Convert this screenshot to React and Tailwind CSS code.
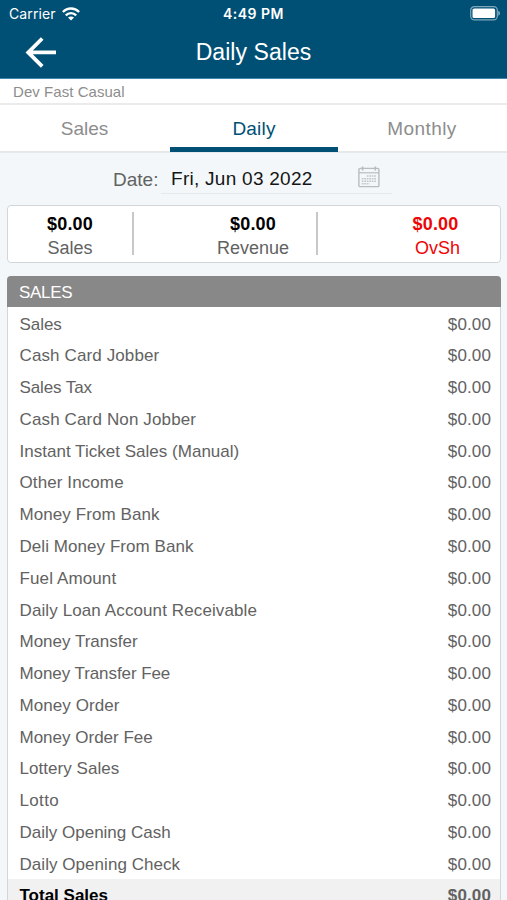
import React from "react";

const rows = [
  ["Sales", "tracking-[-0.05px]"],
  ["Cash Card Jobber", "tracking-[0.12px]"],
  ["Sales Tax", "tracking-[-0.1px]"],
  ["Cash Card Non Jobber", "tracking-[0.14px]"],
  ["Instant Ticket Sales (Manual)", "tracking-[0.02px]"],
  ["Other Income", "tracking-[0.1px]"],
  ["Money From Bank", "tracking-[0.08px]"],
  ["Deli Money From Bank", "tracking-[0.06px]"],
  ["Fuel Amount", "tracking-[0.12px]"],
  ["Daily Loan Account Receivable", "tracking-[0.11px]"],
  ["Money Transfer", "tracking-[0px]"],
  ["Money Transfer Fee", "tracking-[-0.08px]"],
  ["Money Order", "tracking-[0.08px]"],
  ["Money Order Fee", "tracking-[0px]"],
  ["Lottery Sales", "tracking-[0.05px]"],
  ["Lotto", "tracking-[0.35px]"],
  ["Daily Opening Cash", "tracking-[0px]"],
  ["Daily Opening Check", "tracking-[0.05px]"],
];

function WifiIcon() {
  return (
    <svg width="18" height="14" viewBox="0 0 18 14" fill="none" stroke="#fff" strokeWidth="2.4">
      <path d="M0.9 5C5.3 0.4 12.7 0.4 17.1 5" />
      <path d="M3.8 8.3C6.7 5.4 11.3 5.4 14.2 8.3" />
      <path d="M9 13.4L6 10.5C7.7 9 10.3 9 12 10.5Z" fill="#fff" stroke="none" />
    </svg>
  );
}

function BatteryIcon() {
  return (
    <svg width="31" height="15" viewBox="0 0 31 15">
      <rect x="0.7" y="0.7" width="26.6" height="13.2" rx="3.6" fill="none" stroke="#7fa7ba" strokeWidth="1.2" />
      <rect x="2.5" y="2.5" width="22.6" height="9.6" rx="1.6" fill="#fff" />
      <path d="M28.2 4.8V9.8C30.6 8.7 30.6 5.9 28.2 4.8Z" fill="#7fa7ba" />
    </svg>
  );
}

function BackIcon() {
  return (
    <svg width="32" height="32" viewBox="0 0 32 32" fill="none" stroke="#fff" strokeWidth="3.8">
      <path d="M31 15.4H3.2M17.2 1.5L3.2 15.4L17.2 29.3" />
    </svg>
  );
}

function CalendarIcon() {
  return (
    <svg width="22" height="22" viewBox="0 0 22 22" fill="none" stroke="#b9bcbf">
      <rect x="0.9" y="2.4" width="20" height="18.2" rx="1.2" strokeWidth="1.4" />
      <path d="M1 6.8H21" strokeWidth="1.2" />
      <path d="M4.6 0.4V4.4M17.3 0.4V4.4" strokeWidth="1.6" />
      <path
        d="M8.7 10H18.4M3.7 12.7H18.4M3.7 15.3H18.4M3.7 17.8H11.5"
        stroke="#c6c9cc"
        strokeWidth="1.6"
        strokeDasharray="1.8 0.7"
      />
    </svg>
  );
}

export default function App() {
  return (
    <div className="flex h-[900px] w-[507px] flex-col overflow-hidden bg-[#f3f7fa] font-['Liberation_Sans',Arial,sans-serif] text-[#626262]">
      <header className="h-[79px] shrink-0 border-b border-[#3f86ab] bg-[#005075] text-white">
        <div className="grid h-[27px] grid-cols-3 items-center font-['Inter',sans-serif] text-[14px] leading-[27px]">
          <div className="flex items-center gap-[6px] pl-[9px]">
            <span className="tracking-[0.1px]">Carrier</span>
            <WifiIcon />
          </div>
          <div className="text-center font-semibold tracking-[0.5px]">4:49 PM</div>
          <div className="flex justify-end pr-[6px]">
            <BatteryIcon />
          </div>
        </div>
        <div className="grid h-[51px] grid-cols-[1fr_2fr_1fr] items-center">
          <div className="pl-[25px]">
            <BackIcon />
          </div>
          <h1 className="text-center text-[23px] leading-[49px] tracking-[0.05px]">Daily Sales</h1>
        </div>
      </header>

      <div className="h-[26px] shrink-0 border-b-2 border-[#ebebeb] bg-white pl-[13px] text-[15px] leading-[26px] tracking-[0.05px] text-[#8d8d8d]">
        <span>Dev Fast Casual</span>
      </div>

      <nav className="grid h-[48px] shrink-0 grid-cols-3 border-b-2 border-[#e6e8ea] bg-white text-center text-[19px] leading-[48px] text-[#8d8d8d]">
        <div>Sales</div>
        <div className="-mb-[2px] ml-px h-[47px] border-b-[5px] border-[#005075] tracking-[0.2px] text-[#005075]">Daily</div>
        <div className="pr-px tracking-[0.4px]">Monthly</div>
      </nav>

      <div className="flex h-[52px] shrink-0 pl-[113px]">
        <span className="mr-[2px] w-[46px] text-[19px] leading-[53px]">Date:</span>
        <div className="flex h-[41px] w-[231px] items-start justify-between border-b border-[#e6e9ec] pl-[10px] pr-[12px]">
          <span className="text-[19px] leading-[51px] tracking-[0.27px] text-[#151515]">Fri, Jun 03 2022</span>
          <div className="pt-[13px]">
            <CalendarIcon />
          </div>
        </div>
      </div>

      <section className="mx-[7px] flex h-[58px] w-[494px] shrink-0 items-center rounded-[4px] border border-[#d3d6d8] bg-white text-center text-[18px] leading-[24px]">
        <div className="w-[124px] pt-[3px]">
          <div className="font-bold tracking-[0.2px] text-black">$0.00</div>
          <div>Sales</div>
        </div>
        <div className="mb-[2px] h-[43px] w-[2px] bg-[#c8c8c8]" />
        <div className="w-[182px] pl-[56px] pt-[3px]">
          <div className="font-bold tracking-[0.2px] text-black">$0.00</div>
          <div>Revenue</div>
        </div>
        <div className="mb-[2px] h-[43px] w-[2px] bg-[#c8c8c8]" />
        <div className="w-[182px] pl-[54px] pt-[3px] text-[#ee0505]">
          <div className="-ml-px font-bold tracking-[0.2px]">$0.00</div>
          <div className="pl-[3px]">OvSh</div>
        </div>
      </section>

      <section className="mx-[7px] mt-[13px] w-[494px] shrink-0">
        <h2 className="h-[31px] rounded-t-[4px] bg-[#888888] pl-[12px] text-[17px] leading-[33px] tracking-[-0.3px] text-white">
          <span>SALES</span>
        </h2>
        <div className="border-x border-[#d3d6d8] bg-white text-[17px]">
          {rows.map(([name, tracking]) => (
            <div key={name} className="flex h-[31.77px] items-center justify-between pl-[11.5px] pr-[9px] pt-[3px]">
              <span className={tracking}>{name}</span>
              <span className="tracking-[0.12px]">$0.00</span>
            </div>
          ))}
          <div className="flex h-[32px] items-center justify-between bg-[#f1f1f1] pl-[11.5px] pr-[9px] pt-[2px] font-bold">
            <span className="text-black">Total Sales</span>
            <span className="tracking-[0.12px]">$0.00</span>
          </div>
        </div>
      </section>
    </div>
  );
}
